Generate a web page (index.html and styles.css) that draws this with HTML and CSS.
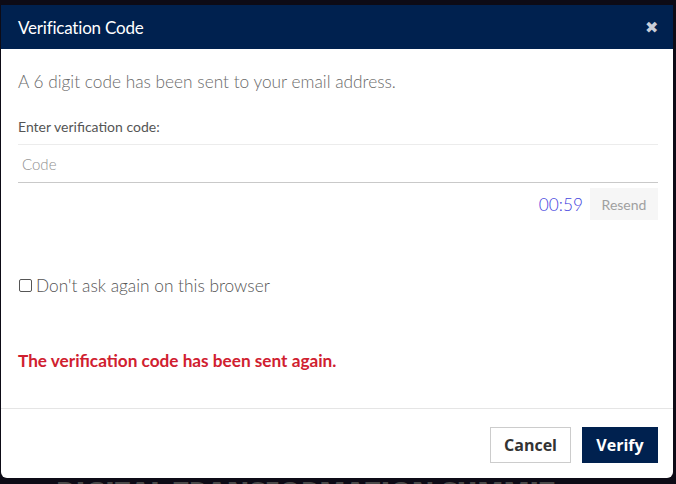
FILE: index.html
```html
<!DOCTYPE html>
<html>
<head>
<meta charset="utf-8">
<link rel="stylesheet" href="styles.css">
</head>
<body>
<div class="modal">
  <div class="modal-header">
    <span class="title">Verification Code</span>
    <span class="close">&#x2716;</span>
  </div>
  <div class="modal-body">
    <p class="intro">A 6 digit code has been sent to your email address.</p>
    <label class="field-label">Enter verification code:</label>
    <div class="input">Code</div>
    <div class="timer-row">
      <span class="timer">00:59</span>
      <span class="resend">Resend</span>
    </div>
    <label class="check-row"><span class="box"></span>Don't ask again on this browser</label>
    <p class="error">The verification code has been sent again.</p>
  </div>
  <div class="modal-footer">
    <span class="btn btn-cancel">Cancel</span>
    <span class="btn btn-verify">Verify</span>
  </div>
</div>
<div class="backdrop">
  <div class="backdrop-text">DIGITAL TRANSFORMATION SUMMIT</div>
</div>
</body>
</html>
```
FILE: styles.css
```css
html, body { margin: 0; padding: 0; }
body {
  background: #0d0b16;
  width: 676px;
  height: 484px;
  overflow: hidden;
  font-family: Lato, "Open Sans", sans-serif;
}
.modal {
  margin: 5px 0 0 1px;
  width: 672px;
  height: 473px;
  background: #fff;
  border-radius: 0 0 6px 6px;
  display: flex;
  flex-direction: column;
  overflow: hidden;
  position: relative;
  z-index: 1;
}
.modal-header {
  background: #00214f;
  height: 44px;
  display: flex;
  align-items: center;
  justify-content: space-between;
  padding: 0 17px;
  color: #fff;
  flex-shrink: 0;
}
.title { font-size: 17px; letter-spacing: -0.2px; }
.close { color: #c9ced8; font-size: 16px; margin-right: -2px; }
.modal-body {
  padding: 20px 15px 0 17px;
  flex: 1;
  color: #666;
}
.intro { margin: 0; font-size: 17.3px; font-weight: 300; color: #6a6a6a; line-height: 26px; }
.field-label { display: block; margin-top: 23px; font-size: 14px; color: #555; line-height: 18px; }
.input {
  margin-top: 8px;
  height: 37px;
  border-top: 1px solid #ececec;
  border-bottom: 1px solid #c9c9c9;
  font-size: 15px;
  font-weight: 300;
  color: #8f8f8f;
  padding-left: 4px;
  display: flex;
  align-items: center;
}
.timer-row {
  display: flex;
  justify-content: flex-end;
  align-items: center;
  margin-top: 5px;
  gap: 7px;
}
.timer { color: #4646de; font-size: 17.3px; font-weight: 300; }
.resend {
  background: #f6f6f6;
  color: #a0a0a0;
  font-size: 14px;
  width: 68px;
  height: 32px;
  display: flex;
  align-items: center;
  justify-content: center;
}
.check-row {
  display: flex;
  align-items: center;
  margin-top: 55px;
  font-size: 17.3px;
  font-weight: 300;
  color: #555;
  gap: 4px;
}
.box {
  width: 11px;
  height: 11px;
  border: 1px solid #555;
  border-radius: 2px;
  margin-left: 1px;
}
.error {
  margin: 54px 0 0;
  color: #d0202f;
  font-size: 17.2px;
  font-weight: 700;
}
.modal-footer {
  border-top: 1px solid #e5e5e5;
  height: 70px;
  display: flex;
  justify-content: flex-end;
  align-items: flex-start;
  gap: 11px;
  padding: 18px 15px 0 0;
  box-sizing: border-box;
  flex-shrink: 0;
}
.btn {
  height: 36px;
  display: flex;
  align-items: center;
  justify-content: center;
  font-family: "Open Sans", sans-serif;
  font-weight: 700;
  font-size: 16px;
  box-sizing: border-box;
}
.btn-cancel { width: 81px; border: 1px solid #ccc; color: #333; }
.btn-verify { width: 76px; background: #00214f; color: #fff; }
.backdrop {
  position: absolute;
  left: 0;
  top: 478px;
  width: 676px;
  height: 6px;
  overflow: hidden;
}
.backdrop-text {
  margin: -4px 0 0 56px;
  font-family: "Open Sans", sans-serif;
  font-weight: 800;
  font-size: 27px;
  line-height: 34px;
  color: #4a4a4a;
  white-space: nowrap;
}
```
